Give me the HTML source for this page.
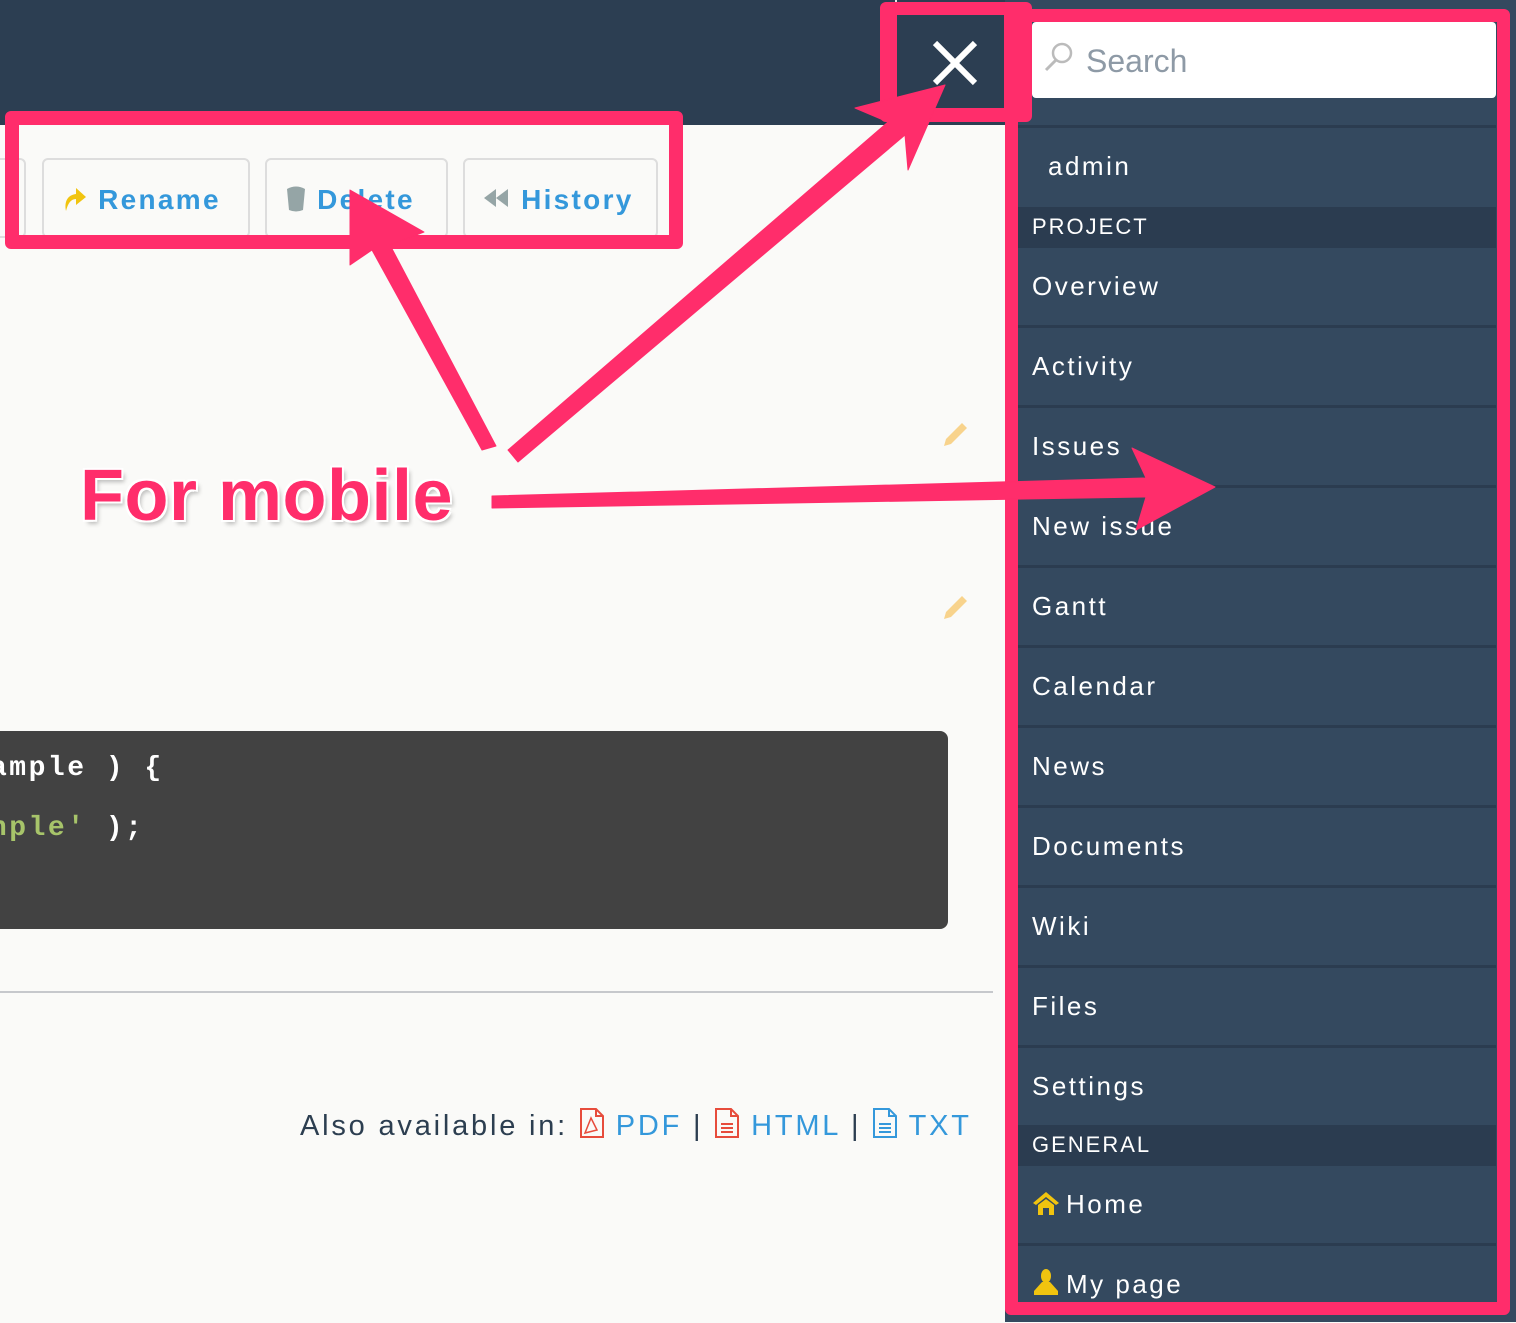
<!DOCTYPE html>
<html><head><meta charset="utf-8"><style>
*{margin:0;padding:0;box-sizing:border-box}
body{width:1516px;height:1322px;overflow:hidden;background:#fafaf8;font-family:"Liberation Sans",sans-serif;position:relative}
.abs{position:absolute}
.hdr{left:0;top:0;width:1005px;height:125px;background:#2c3e52}
.side{left:1005px;top:0;width:511px;height:1322px;background:#34495f}
.item{position:absolute;left:1018px;width:478px;height:80px;border-top:3px solid #2b3c50;color:#fff;font-size:26px;letter-spacing:2.5px;line-height:77px;padding-left:14px}
.sec{position:absolute;left:1018px;width:478px;height:38px;background:#2b3c50;color:#fff;font-size:22px;letter-spacing:2px;line-height:40px;padding-left:14px}
.btn{position:absolute;top:158px;height:80px;border:2px solid #ddd;border-radius:6px;background:#fafaf8;color:#3498db;font-weight:bold;font-size:28px;letter-spacing:2.3px;line-height:80px;padding-left:18px}
.pink{position:absolute;border:13px solid #ff2d6b;border-radius:6px}
</style></head><body>
<div class="abs hdr"></div>
<div class="abs" style="left:895px;top:0;width:2px;height:98px;background:#e8e8e8"></div>

<div class="btn" style="left:-10px;width:36px"></div>
<div class="btn" style="left:42px;width:208px"><svg width="26" height="30" viewBox="0 0 26 30" style="vertical-align:-4px"><path d="M4 28 C2 18 6 12 14 11 L14 5 L24 14 L14 22 L14 16 C9 16 6 20 4 28Z" fill="#f1c40f"/></svg> Rename</div>
<div class="btn" style="left:265px;width:183px"><svg width="22" height="30" viewBox="0 0 22 30" style="vertical-align:-4px"><path d="M2 6 Q11 1 20 6 L18 27 Q11 30 4 27Z" fill="#95a5a6"/></svg> Delete</div>
<div class="btn" style="left:463px;width:195px"><svg width="28" height="22" viewBox="0 0 28 22" style="vertical-align:0"><path d="M1 11 L13 2 V20Z M13 11 L25 2 V20Z" fill="#95a5a6"/></svg> History</div>

<svg class="abs" style="left:940px;top:420px" width="30" height="30" viewBox="0 0 30 30"><path d="M4 26 L6 19 L22 3 L27 8 L11 24Z" fill="#f8d38c"/></svg>
<svg class="abs" style="left:940px;top:593px" width="30" height="30" viewBox="0 0 30 30"><path d="M4 26 L6 19 L22 3 L27 8 L11 24Z" fill="#f8d38c"/></svg>

<div class="abs" style="left:-10px;top:731px;width:958px;height:198px;background:#424242;border-radius:8px;font-family:'Liberation Mono',monospace;font-size:28px;color:#fff;font-weight:bold">
<div style="position:absolute;left:0;top:22px;letter-spacing:2.5px">ample ) {</div>
<div style="position:absolute;left:0;top:82px;letter-spacing:2.5px"><span style="color:#a7c46a">nple'</span> );</div>
</div>
<div class="abs" style="left:0;top:991px;width:993px;height:2px;background:#c6c8cc"></div>

<div class="abs" style="left:300px;top:1108px;font-size:29px;letter-spacing:2.8px;color:#2c3e50;white-space:nowrap">Also available in: <svg width="26" height="30" viewBox="0 0 26 30" style="vertical-align:-3px"><path d="M2 1 H17 L24 8 V29 H2Z M17 1 V8 H24" fill="none" stroke="#e74c3c" stroke-width="2"/><path d="M6 25 L12 10 L18 22 Z" fill="none" stroke="#e74c3c" stroke-width="1.5"/></svg> <span style="color:#3498db">PDF</span> | <svg width="26" height="30" viewBox="0 0 26 30" style="vertical-align:-3px"><path d="M2 1 H17 L24 8 V29 H2Z M17 1 V8 H24" fill="none" stroke="#e74c3c" stroke-width="2"/><path d="M7 16H19M7 20H19M7 24H19" stroke="#e74c3c" stroke-width="2"/></svg> <span style="color:#3498db">HTML</span> | <svg width="26" height="30" viewBox="0 0 26 30" style="vertical-align:-3px"><path d="M2 1 H17 L24 8 V29 H2Z M17 1 V8 H24" fill="none" stroke="#3498db" stroke-width="2"/><path d="M7 16H19M7 20H19M7 24H19" stroke="#3498db" stroke-width="2"/></svg> <span style="color:#3498db">TXT</span></div>

<div class="abs side"></div>
<div class="abs" style="left:1032px;top:22px;width:464px;height:76px;background:#fff;border-radius:4px;color:#8e9aa6;font-size:32px;line-height:78px;padding-left:54px">Search
<svg class="abs" style="left:10px;top:18px" width="34" height="34" viewBox="0 0 34 34"><circle cx="20" cy="13" r="9" fill="none" stroke="#bbb" stroke-width="2.5"/><path d="M14 20 L4 30" stroke="#bbb" stroke-width="3"/></svg></div>
<div class="item" style="top:125px;padding-left:30px">admin</div>
<div class="sec" style="top:207px">PROJECT</div>
<div class="item" style="top:245px">Overview</div>
<div class="item" style="top:325px">Activity</div>
<div class="item" style="top:405px">Issues</div>
<div class="item" style="top:485px">New issue</div>
<div class="item" style="top:565px">Gantt</div>
<div class="item" style="top:645px">Calendar</div>
<div class="item" style="top:725px">News</div>
<div class="item" style="top:805px">Documents</div>
<div class="item" style="top:885px">Wiki</div>
<div class="item" style="top:965px">Files</div>
<div class="item" style="top:1045px">Settings</div>
<div class="sec" style="top:1125px">GENERAL</div>
<div class="item" style="top:1163px"><svg width="28" height="24" viewBox="0 0 28 24" style="vertical-align:-2px;margin-right:6px"><path d="M14 1 L27 12 L24 14 L14 6 L4 14 L1 12Z M6 14 L14 8 L22 14 V24 H17 V17 H11 V24 H6Z" fill="#f1c40f"/></svg>Home</div>
<div class="item" style="top:1243px"><svg width="28" height="26" viewBox="0 0 28 26" style="vertical-align:-2px;margin-right:6px"><ellipse cx="14" cy="7" rx="5" ry="7" fill="#f1c40f"/><path d="M10 13 H18 L26 22 V26 H2 V22Z" fill="#f1c40f"/></svg>My page</div>

<div class="pink" style="left:1005px;top:9px;width:505px;height:1306px"></div>
<div class="abs" style="left:880px;top:2px;width:152px;height:120px;background:#ff2d6b;border-radius:6px"></div>
<div class="abs" style="left:897px;top:15px;width:107px;height:93px;background:#2c3e52"></div>
<svg class="abs" style="left:930px;top:38px" width="50" height="50" viewBox="0 0 50 50"><path d="M5 5 L45 45 M45 5 L5 45" stroke="#fff" stroke-width="6"/></svg>
<div class="pink" style="left:5px;top:111px;width:678px;height:138px;border-width:14px"></div>

<svg class="abs" style="left:0;top:0" width="1516" height="1322" viewBox="0 0 1516 1322">
<g fill="#ff2d6b" stroke="#ff2d6b" stroke-linejoin="round">
<polygon points="482,450 496,446 390,245 424,232 350,190 350,265 372,250"/>
<polygon points="508,450 518,462 905,135 908,170 945,85 855,108 888,122"/>
<polygon points="492,496 492,508 1146,497 1136,530 1215,487 1132,448 1146,478"/>
</g>
</svg>
<div class="abs" style="left:80px;top:455px;font-size:72px;font-weight:bold;color:#ff2d6b;letter-spacing:0.5px;text-shadow:2px 2px 0 #fff,-2px -2px 0 #fff,2px -2px 0 #fff,-2px 2px 0 #fff,3px 4px 4px rgba(0,0,0,.25)">For mobile</div>
</body></html>
